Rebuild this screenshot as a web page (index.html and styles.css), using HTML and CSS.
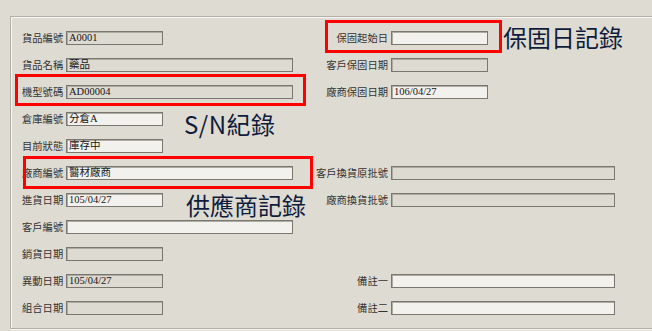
FILE: index.html
```html
<!DOCTYPE html>
<html lang="zh-Hant">
<head>
<meta charset="utf-8">
<title>貨品資料</title>
<link rel="stylesheet" href="styles.css">
</head>
<body>
<div class="group">
  <div class="form">
    <div class="pair left"><span class="lbl">貨品編號</span><span class="fld ro short">A0001</span></div>
    <div class="pair left"><span class="lbl">貨品名稱</span><span class="fld ro long">藥品</span></div>
    <div class="pair left"><span class="lbl">機型號碼</span><span class="fld ro long">AD00004</span></div>
    <div class="pair left"><span class="lbl">倉庫編號</span><span class="fld short">分倉A</span></div>
    <div class="pair left"><span class="lbl">目前狀態</span><span class="fld short">庫存中</span></div>
    <div class="pair left"><span class="lbl">廠商編號</span><span class="fld long">醫材廠商</span></div>
    <div class="pair left"><span class="lbl">進貨日期</span><span class="fld short">105/04/27</span></div>
    <div class="pair left"><span class="lbl">客戶編號</span><span class="fld long"></span></div>
    <div class="pair left"><span class="lbl">銷貨日期</span><span class="fld ro short"></span></div>
    <div class="pair left"><span class="lbl">異動日期</span><span class="fld ro short">105/04/27</span></div>
    <div class="pair left"><span class="lbl">組合日期</span><span class="fld ro short"></span></div>

    <div class="pair right row1"><span class="lbl">保固起始日</span><span class="fld short">&nbsp;</span></div>
    <div class="pair right row2"><span class="lbl">客戶保固日期</span><span class="fld ro short"></span></div>
    <div class="pair right row3"><span class="lbl">廠商保固日期</span><span class="fld short">106/04/27</span></div>
    <div class="pair right row6"><span class="lbl">客戶換貨原批號</span><span class="fld ro wide"></span></div>
    <div class="pair right row7"><span class="lbl">廠商換貨批號</span><span class="fld ro wide"></span></div>
    <div class="pair right row10"><span class="lbl">備註一</span><span class="fld wide"></span></div>
    <div class="pair right row11"><span class="lbl">備註二</span><span class="fld wide"></span></div>
  </div>

  <div class="mark mark-model"></div>
  <div class="mark mark-vendor"></div>
  <div class="mark mark-warranty"></div>
  <span class="note note-warranty">保固日記錄</span>
  <span class="note note-sn">S/N紀錄</span>
  <span class="note note-vendor">供應商記錄</span>
</div>
</body>
</html>
```

FILE: styles.css
```css
html, body {
  margin: 0;
  padding: 0;
  background: #dedbd2;
  width: 652px;
  height: 331px;
  overflow: hidden;
}

body {
  font-family: "Noto Sans CJK TC", "Noto Sans", sans-serif;
}

.group {
  position: relative;
  box-sizing: border-box;
  margin: 16px 0 0 10px;
  width: 642px;
  height: 313px;
  border-top: 1px solid #b3afa6;
  border-left: 1px solid #b3afa6;
  border-bottom: 1px solid #b3afa6;
  box-shadow: inset 1px 1px 0 #f7f6f2, 0 1px 0 #f7f6f2;
  padding: 7.5px 0 0 11px;
}

.form {
  display: grid;
  grid-template-columns: 44px 227px 98px 224px;
  grid-template-rows: repeat(11, 27px);
}

.pair {
  display: flex;
  align-items: center;
}

.pair.left { grid-column: 1 / 3; }
.pair.right { grid-column: 3 / 5; }

.row1 { grid-row: 1; }
.row2 { grid-row: 2; }
.row3 { grid-row: 3; }
.row6 { grid-row: 6; }
.row7 { grid-row: 7; }
.row10 { grid-row: 10; }
.row11 { grid-row: 11; }

.lbl {
  font-size: 10.3px;
  line-height: 14px;
  color: #333333;
  white-space: nowrap;
  flex: none;
}

.left .lbl { width: 44px; }

.right .lbl {
  width: 95px;
  padding-right: 3px;
  text-align: right;
}

.fld {
  box-sizing: border-box;
  height: 14px;
  flex: none;
  border: 1px solid #7a7771;
  box-shadow: inset 1px 1px 0 #aeaba3;
  background: #f3f1ed;
  padding: 0 0 0 2px;
  font-family: "Liberation Serif", "Noto Sans CJK TC", serif;
  font-size: 10.5px;
  line-height: 12px;
  color: #151515;
  white-space: nowrap;
  overflow: hidden;
}

.fld.ro { background: #dddad1; }

.short { width: 97px; }
.long { width: 227px; }
.wide { width: 224px; }

.mark {
  position: absolute;
  box-sizing: border-box;
  border: 3px solid #ff0000;
  pointer-events: none;
}

.mark-model { left: 4px; top: 57px; width: 291px; height: 32px; }
.mark-vendor { left: 12px; top: 139px; width: 290px; height: 33px; }
.mark-warranty { left: 314px; top: 3px; width: 177px; height: 33px; }

.note {
  position: absolute;
  font-family: "Noto Sans CJK TC", "Noto Sans", sans-serif;
  font-size: 24px;
  line-height: 24px;
  color: #101c3c;
  white-space: nowrap;
}

.note-warranty { left: 492px; top: 8px; }
.note-sn { left: 173px; top: 95px; letter-spacing: 0.5px; }
.note-vendor { left: 175px; top: 176px; }
```
